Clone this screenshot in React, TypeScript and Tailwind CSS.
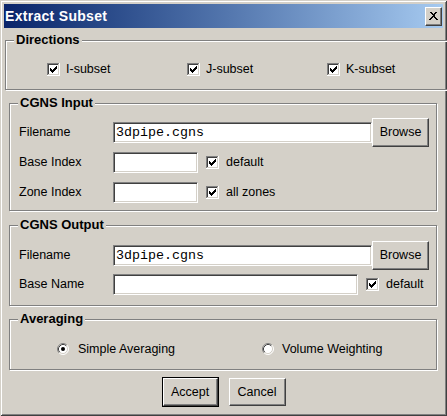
import React from "react"

const Check = () => (
  <svg width="13" height="13" viewBox="0 0 13 13" shapeRendering="crispEdges" className="shrink-0">
    <rect x="0" y="0" width="13" height="13" fill="#ffffff" />
    <rect x="0" y="0" width="12" height="1" fill="#808080" />
    <rect x="0" y="0" width="1" height="12" fill="#808080" />
    <rect x="1" y="1" width="10" height="1" fill="#404040" />
    <rect x="1" y="1" width="1" height="10" fill="#404040" />
    <rect x="1" y="11" width="11" height="1" fill="#d4d0c8" />
    <rect x="11" y="1" width="1" height="11" fill="#d4d0c8" />
    <rect x="3" y="5" width="1" height="3" fill="#000" />
    <rect x="4" y="6" width="1" height="3" fill="#000" />
    <rect x="5" y="7" width="1" height="3" fill="#000" />
    <rect x="6" y="6" width="1" height="3" fill="#000" />
    <rect x="7" y="5" width="1" height="3" fill="#000" />
    <rect x="8" y="4" width="1" height="3" fill="#000" />
    <rect x="9" y="3" width="1" height="3" fill="#000" />
  </svg>
)

const Radio = ({ on }: { on?: boolean }) => (
  <svg width="12" height="12" viewBox="0 0 12 12" className="shrink-0">
    <circle cx="6" cy="6" r="5" fill="#ffffff" />
    <path d="M2.11 9.89 A5.5 5.5 0 0 1 9.89 2.11" fill="none" stroke="#808080" />
    <path d="M9.89 2.11 A5.5 5.5 0 0 1 2.11 9.89" fill="none" stroke="#ffffff" />
    <path d="M2.82 9.18 A4.5 4.5 0 0 1 9.18 2.82" fill="none" stroke="#404040" />
    <path d="M9.18 2.82 A4.5 4.5 0 0 1 2.82 9.18" fill="none" stroke="#d4d0c8" />
    {on && <circle cx="6" cy="6" r="2" fill="#000" />}
  </svg>
)

const field =
  "h-[21px] bg-white border border-t-[#808080] border-l-[#808080] border-b-white border-r-white shadow-[inset_1px_1px_0_#404040,inset_-1px_-1px_0_#d4d0c8] px-[2px] font-['Liberation_Mono','Courier_New',monospace] text-[13.33px] text-black outline-none"

const raised =
  "bg-[#d4d0c8] border border-t-white border-l-white border-b-[#404040] border-r-[#404040] shadow-[inset_-1px_-1px_0_#808080] text-[12.5px] text-black flex items-center justify-center"

const legend = "ml-[8px] px-[2px] bg-[#d4d0c8] text-[13px] font-bold leading-[16px]"
const frame = "w-[428px] border border-[#808080] shadow-[inset_1px_1px_0_#ffffff,1px_1px_0_#ffffff]"

const Row = ({ label, h, children }: { label: string; h: string; children: React.ReactNode }) => (
  <div className={`flex items-center ${h}`}>
    <span className="w-[94px] shrink-0">{label}</span>
    {children}
  </div>
)

export default function App() {
  return (
    <div className="w-[447px] h-[416px] bg-[#d4d0c8] p-[4px] flex flex-col shadow-[inset_1px_1px_0_#d4d0c8,inset_-1px_-1px_0_#404040,inset_2px_2px_0_#ffffff,inset_-2px_-2px_0_#808080] font-['Liberation_Sans',Arial,sans-serif] text-[12.5px] text-black overflow-hidden">
      {/* title bar */}
      <div className="h-[24px] flex items-center justify-between pl-[1px] pr-[1px] bg-linear-to-r from-[#0a246a] to-[#a6caf0]">
        <span className="text-white font-bold text-[14px] tracking-[0.3px]">Extract Subset</span>
        <div className={`${raised} w-[17px] h-[19px]`}>
          <svg width="9" height="8" viewBox="0 0 9 8" shapeRendering="crispEdges">
            <path d="M1 0h2v1h-2z M6 0h2v1h-2z M2 1h2v1h-2z M5 1h2v1h-2z M3 2h3v1h-3z M3.5 3h2v1h-2z M3 4h3v1h-3z M2 5h2v1h-2z M5 5h2v1h-2z M1 6h2v1h-2z M6 6h2v1h-2z M0 7h2v1h-2z M7 7h2v1h-2z" fill="#000" />
          </svg>
        </div>
      </div>

      <fieldset className={`${frame} mt-[4px] ml-[1px]`}>
        <legend className={legend}>Directions</legend>
        <div className="flex items-center h-[20px] pl-[41px] mt-[11px] mb-[10px]">
          {["I-subset", "J-subset", "K-subset"].map((t) => (
            <div key={t} className="w-[140px] flex items-center gap-[6px]">
              <Check />
              <span>{t}</span>
            </div>
          ))}
        </div>
      </fieldset>

      <fieldset className={`${frame} mt-[5px] ml-[5px]`}>
        <legend className={legend}>CGNS Input</legend>
        <div className="pl-[9px] pt-[6px] pb-[3px]">
          <Row label="Filename" h="h-[30px]">
            <input className={`${field} w-[259px]`} defaultValue="3dpipe.cgns" />
            <div className={`${raised} w-[57px] h-[29px]`}>Browse</div>
          </Row>
          <Row label="Base Index" h="h-[30px]">
            <input className={`${field} w-[85px]`} defaultValue="" />
            <span className="ml-[8px]"><Check /></span>
            <span className="ml-[7px]">default</span>
          </Row>
          <Row label="Zone Index" h="h-[30px]">
            <input className={`${field} w-[85px]`} defaultValue="" />
            <span className="ml-[8px]"><Check /></span>
            <span className="ml-[7px]">all zones</span>
          </Row>
        </div>
      </fieldset>

      <fieldset className={`${frame} mt-[6px] ml-[5px]`}>
        <legend className={legend}>CGNS Output</legend>
        <div className="pl-[9px] pt-[7px] pb-[7px]">
          <Row label="Filename" h="h-[30px]">
            <input className={`${field} w-[259px]`} defaultValue="3dpipe.cgns" />
            <div className={`${raised} w-[57px] h-[29px]`}>Browse</div>
          </Row>
          <Row label="Base Name" h="h-[28px]">
            <input className={`${field} w-[245px]`} defaultValue="" />
            <span className="ml-[8px]"><Check /></span>
            <span className="ml-[7px]">default</span>
          </Row>
        </div>
      </fieldset>

      <fieldset className={`${frame} mt-[5px] ml-[5px]`}>
        <legend className={legend}>Averaging</legend>
        <div className="flex items-center h-[20px] pl-[47px] mt-[12px] mb-[10px]">
          <div className="w-[205px] flex items-center gap-[9px]">
            <Radio on />
            <span>Simple Averaging</span>
          </div>
          <div className="flex items-center gap-[8px]">
            <Radio />
            <span>Volume Weighting</span>
          </div>
        </div>
      </fieldset>

      <div className="mt-[7px] flex items-center justify-center gap-[10px]">
        <div className="border border-black">
          <div className={`${raised} w-[55px] h-[28px]`}>Accept</div>
        </div>
        <div className={`${raised} w-[57px] h-[28px]`}>Cancel</div>
      </div>
    </div>
  )
}
